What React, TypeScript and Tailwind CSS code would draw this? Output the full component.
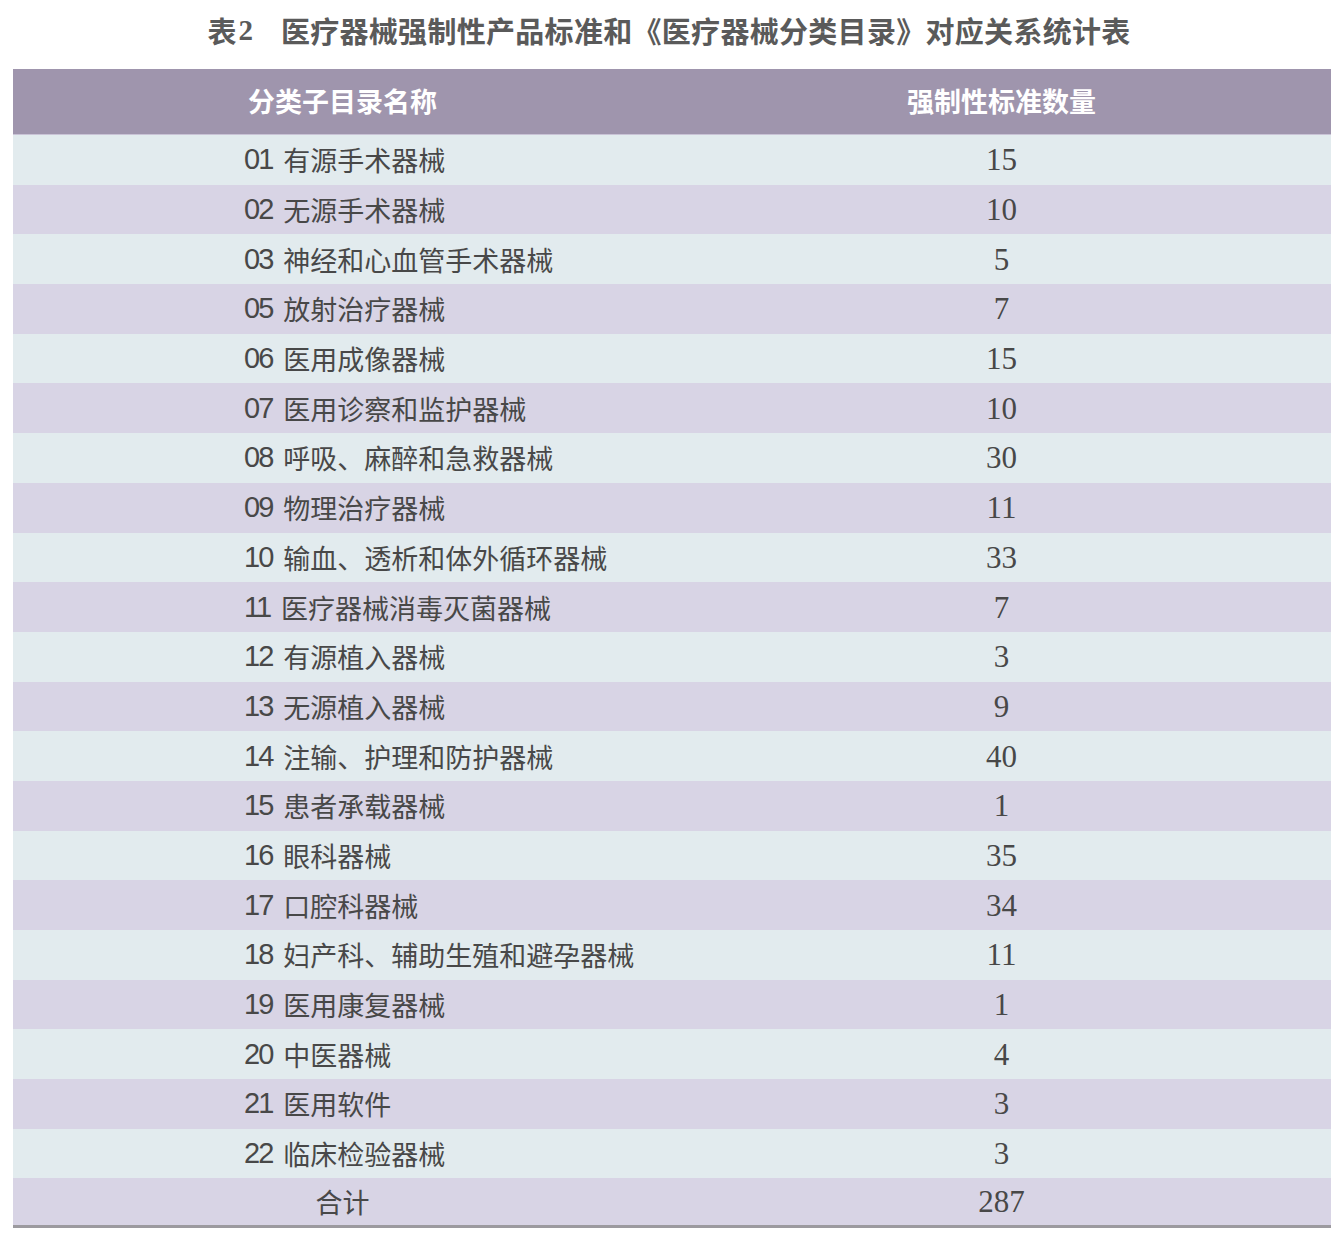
import React from 'react';

const rows: [string, string, number][] = [
  ['01', '有源手术器械', 15],
  ['02', '无源手术器械', 10],
  ['03', '神经和心血管手术器械', 5],
  ['05', '放射治疗器械', 7],
  ['06', '医用成像器械', 15],
  ['07', '医用诊察和监护器械', 10],
  ['08', '呼吸、麻醉和急救器械', 30],
  ['09', '物理治疗器械', 11],
  ['10', '输血、透析和体外循环器械', 33],
  ['11', '医疗器械消毒灭菌器械', 7],
  ['12', '有源植入器械', 3],
  ['13', '无源植入器械', 9],
  ['14', '注输、护理和防护器械', 40],
  ['15', '患者承载器械', 1],
  ['16', '眼科器械', 35],
  ['17', '口腔科器械', 34],
  ['18', '妇产科、辅助生殖和避孕器械', 11],
  ['19', '医用康复器械', 1],
  ['20', '中医器械', 4],
  ['21', '医用软件', 3],
  ['22', '临床检验器械', 3],
];

const cjk = { fontFamily: '"Noto Sans CJK SC", "Noto Sans", sans-serif' };
const digits = { fontFamily: '"Liberation Sans", "Noto Sans CJK SC", sans-serif' };
const serif = { fontFamily: '"Liberation Serif", "Noto Sans CJK SC", serif' };

export default function App() {
  return (
    <div className="w-[1342px] h-[1242px] bg-white text-[#484848]">
      {/* Title */}
      <div className="h-[69px] pt-[12px] flex justify-center">
        <h1 className="text-[29px] leading-[36px] font-bold text-[#5a5a5a] flex translate-x-[-2px]" style={cjk}>
          <span>表</span>
          <span className="ml-[2px] mr-[28px]" style={serif}>2</span>
          <span className="tracking-[0.3px]">医疗器械强制性产品标准和《医疗器械分类目录》对应关系统计表</span>
        </h1>
      </div>

      {/* Table */}
      <div className="mx-[13px] w-[1318px]">
        <div className="h-[66px] grid grid-cols-2 items-center bg-[#9f95ad] text-white font-bold text-[27px] border-b border-[#c9c3d6]" style={cjk}>
          <div className="text-center">分类子目录名称</div>
          <div className="text-center">强制性标准数量</div>
        </div>

        {rows.map(([code, name, count], i) => (
          <div
            key={code}
            className={
              'h-[49.7px] grid grid-cols-2 items-center ' +
              (i % 2 === 0 ? 'bg-[#e2ebee]' : 'bg-[#d8d4e5]')
            }
          >
            <div className="pl-[231px] flex items-center leading-none">
              <span className="text-[29px] tracking-[-2px]" style={digits}>{code}</span>
              <span className="ml-[11px] text-[27px]" style={cjk}>{name}</span>
            </div>
            <div className="text-center text-[31px] leading-none" style={serif}>{count}</div>
          </div>
        ))}

        <div className="h-[49.7px] grid grid-cols-2 items-center bg-[#d8d4e5] border-b-[3px] border-[#9c9a9f]">
          <div className="text-center text-[27px] leading-none" style={cjk}>合计</div>
          <div className="text-center text-[31px] leading-none" style={serif}>287</div>
        </div>
      </div>
    </div>
  );
}
